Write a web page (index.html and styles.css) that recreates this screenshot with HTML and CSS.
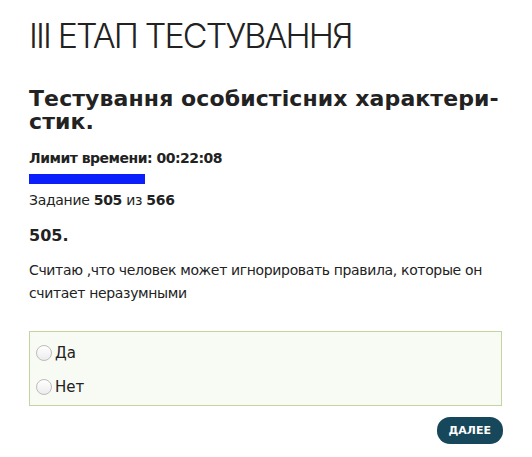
FILE: index.html
```html
<!DOCTYPE html>
<html lang="uk">
<head>
<meta charset="utf-8">
<link rel="stylesheet" href="styles.css">
</head>
<body>
<div class="page">
  <h1 class="title">III ЕТАП ТЕСТУВАННЯ</h1>
  <h2 class="subtitle">Тестування особистісних характери-<br>стик.</h2>
  <div class="timer">Лимит времени: 00:22:08</div>
  <div class="bar"></div>
  <div class="counter">Задание <b>505</b> из <b>566</b></div>
  <div class="qnum">505.</div>
  <p class="question">Считаю ,что человек может игнорировать правила, которые он считает неразумными</p>
  <div class="answers">
    <label class="option"><span class="radio"></span>Да</label>
    <label class="option"><span class="radio"></span>Нет</label>
  </div>
  <div class="actions"><button class="next">ДАЛЕЕ</button></div>
</div>
</body>
</html>
```
FILE: styles.css
```css
html, body { margin: 0; padding: 0; background: #fff; }
body { font-family: "DejaVu Sans", Verdana, sans-serif; color: #222; }
.page { padding: 0 30px 0 29px; }
.title {
  margin: 0; padding-top: 18px;
  font-family: Inter, "Liberation Sans", sans-serif;
  font-weight: 300; font-size: 34px; line-height: 36px;
  letter-spacing: -1.9px; color: #222;
}
.subtitle {
  margin: 33px 0 0; font-size: 22px; line-height: 23px; font-weight: 700; color: #222;
  letter-spacing: 0.1px;
}
.timer { margin-top: 17px; font-size: 14px; font-weight: 700; line-height: 16px; letter-spacing: -0.5px; }
.bar { width: 116px; height: 10px; background: #0a1ffc; margin-top: 8px; }
.counter { margin-top: 8px; font-size: 14px; line-height: 16px; letter-spacing: -0.3px; }
.counter b { font-weight: 700; }
.qnum { margin-top: 19px; font-size: 16px; font-weight: 700; line-height: 18px; }
.question { margin: 14px 0 0; font-size: 14px; line-height: 23px; letter-spacing: -0.35px; }
.answers {
  margin-top: 26px; border: 1px solid #c4d39f; background: #f8faf4;
  padding: 4px 6px 1px; width: 459px;
}
.option { display: flex; align-items: center; gap: 3px; font-size: 15px; line-height: 34px; }
.radio {
  width: 16px; height: 16px; border-radius: 50%; border: 1px solid #bdbdbd;
  background: linear-gradient(#fff, #ececec); box-sizing: border-box;
}
.actions { display: flex; justify-content: flex-end; margin-top: 11px; width: 474px; }
.next {
  background: #17475a; color: #fff; border: 0; border-radius: 13px;
  font-family: "DejaVu Sans", Verdana, sans-serif; font-weight: 700; font-size: 11px;
  height: 27px; padding: 0 12px;
}
```
